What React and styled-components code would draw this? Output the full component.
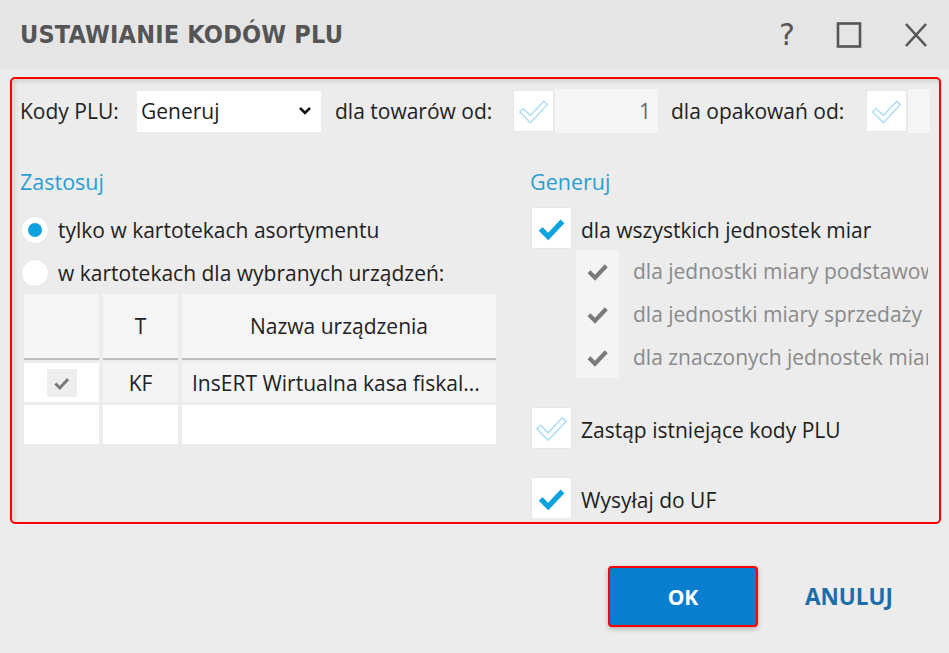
import React, { useState } from 'react';
import styled, { createGlobalStyle } from 'styled-components';

const GlobalStyle = createGlobalStyle`
  html, body {
    margin: 0;
    padding: 0;
    background: #ececec;
  }
  body {
    font-family: "Open Sans", "Noto Sans", sans-serif;
    color: #1e1e1e;
  }
`;

const Check = ({ variant = 'solid', size = 40 }) => {
  const path = 'M8 21 L16 29 L31 13';
  if (variant === 'outline') {
    return (
      <svg width={size} height={size} viewBox="0 0 40 40">
        <path d={path} fill="none" stroke="#a9dcf2" strokeWidth="7" strokeLinejoin="miter" strokeLinecap="square" />
        <path d={path} fill="none" stroke="#ffffff" strokeWidth="4" strokeLinejoin="miter" strokeLinecap="square" />
      </svg>
    );
  }
  const color = variant === 'gray' ? '#7a7a7a' : '#0ea2df';
  return (
    <svg width={size} height={size} viewBox="0 0 40 40">
      <path d={path} fill="none" stroke={color} strokeWidth="5.5" strokeLinejoin="miter" strokeLinecap="butt" />
    </svg>
  );
};

const Window = styled.div`
  width: 949px;
  height: 653px;
  display: flex;
  flex-direction: column;
  background: #ececec;
  overflow: hidden;
`;

const TitleBar = styled.div`
  height: 69px;
  flex-shrink: 0;
  background: #e5e5e5;
  display: flex;
  align-items: center;
  padding: 0 20px;
`;

const Title = styled.h1`
  flex: 1;
  margin: 0;
  font-family: "Liberation Sans Narrow", "DejaVu Sans Condensed", "Liberation Sans", sans-serif;
  font-weight: 700;
  font-size: 25px;
  color: #555;
  letter-spacing: 0.2px;
`;

const WinButtons = styled.div`
  display: flex;
  align-items: center;
  gap: 41px;
  color: #555;
`;

const HelpGlyph = styled.span`
  font-family: "DejaVu Sans", sans-serif;
  font-size: 30px;
  line-height: 1;
  color: #555;
`;

const Body = styled.div`
  padding: 8px 8px 0 10px;
`;

const Panel = styled.div`
  height: 447px;
  box-sizing: border-box;
  border: 2px solid #f00;
  border-radius: 5px;
  background: #ececec;
  box-shadow: inset 3px 3px 5px rgba(0, 0, 0, 0.1);
  padding: 10px 10px 0 8px;
  overflow: hidden;
`;

const TopRow = styled.div`
  display: flex;
  align-items: center;
  height: 44px;
  font-size: 21px;
`;

const Label = styled.span`
  width: ${({ $w }) => $w}px;
  flex-shrink: 0;
  white-space: nowrap;
  color: #222;
`;

const Select = styled.div`
  width: 184px;
  height: 41px;
  box-sizing: border-box;
  background: #fff;
  display: flex;
  align-items: center;
  justify-content: space-between;
  padding: 0 9px 0 4px;
  margin-right: 14px;
  flex-shrink: 0;
`;

const Box = styled.div`
  width: 41px;
  height: 42px;
  box-sizing: border-box;
  background: #fff;
  border: 1px solid #e6e6e6;
  display: flex;
  align-items: center;
  justify-content: center;
  flex-shrink: 0;
`;

const NumField = styled.div`
  width: ${({ $w }) => $w}px;
  height: 44px;
  background: #f5f5f5;
  margin-left: 1px;
  display: flex;
  align-items: center;
  justify-content: flex-end;
  padding-right: 7px;
  box-sizing: border-box;
  color: #666;
  flex-shrink: 0;
`;

const Gap = styled.div`
  width: ${({ $w }) => $w}px;
  flex-shrink: 0;
`;

const Columns = styled.div`
  display: grid;
  grid-template-columns: 478px 398px;
  column-gap: 32px;
  margin-top: 35px;
`;

const Column = styled.div`
  display: flex;
  flex-direction: column;
  overflow: hidden;
`;

const SectionTitle = styled.div`
  font-size: 21.5px;
  line-height: 28px;
  color: #2a9fd0;
  margin-bottom: 12px;
`;

const OptionRow = styled.div`
  display: flex;
  align-items: center;
  height: 43px;
  gap: 10px;
  font-size: 21px;
  white-space: nowrap;
  color: #1e1e1e;
`;

const Radio = styled.div`
  width: 26px;
  height: 26px;
  border-radius: 50%;
  background: #fff;
  margin-left: 2px;
  flex-shrink: 0;
  box-shadow: 0 0 2px rgba(0, 0, 0, 0.08);
  display: flex;
  align-items: center;
  justify-content: center;
  &::after {
    content: '';
    width: 14px;
    height: 14px;
    border-radius: 50%;
    background: ${({ $on }) => ($on ? '#0ea2df' : 'transparent')};
  }
`;

const Table = styled.div`
  display: grid;
  grid-template-columns: 75px 75px 314px;
  column-gap: 4px;
  row-gap: 3px;
  margin-left: 4px;
  font-size: 21px;
`;

const HeadCell = styled.div`
  height: 64px;
  background: #f5f5f5;
  border-bottom: 2px solid #bdbdbd;
  display: flex;
  align-items: center;
  justify-content: center;
  color: #222;
`;

const Cell = styled.div`
  height: 39px;
  background: ${({ $tone }) => ($tone === 'grey' ? '#f4f4f4' : '#fff')};
  display: flex;
  align-items: center;
  justify-content: ${({ $left }) => ($left ? 'flex-start' : 'center')};
  padding-left: ${({ $left }) => ($left ? '10px' : '0')};
  white-space: nowrap;
  overflow: hidden;
  color: #222;
`;

const MiniBox = styled.div`
  width: 30px;
  height: 28px;
  background: #eeeeee;
  display: flex;
  align-items: center;
  justify-content: center;
`;

const CheckRow = styled.div`
  display: flex;
  align-items: center;
  gap: 9px;
  height: 40px;
  margin-left: 1px;
  margin-top: ${({ $mt }) => $mt || 0}px;
  font-size: 21px;
  white-space: nowrap;
  color: #1e1e1e;
`;

const CheckText = styled.span`
  padding-top: 3px;
`;

const SubList = styled.div`
  display: flex;
  flex-direction: column;
  margin-left: 46px;
  margin-top: 2px;
`;

const SubRow = styled.div`
  display: flex;
  align-items: center;
  height: 42.7px;
  font-size: 21px;
  white-space: nowrap;
  color: #8a8a8a;
`;

const SubCheck = styled.div`
  width: 43px;
  height: 100%;
  background: #f4f4f4;
  display: flex;
  align-items: center;
  justify-content: center;
  margin-right: 14px;
  flex-shrink: 0;
`;

const Footer = styled.div`
  display: flex;
  align-items: center;
  justify-content: flex-end;
  gap: 47px;
  padding: 42px 48px 0 0;
`;

const OkButton = styled.button`
  width: 150px;
  height: 61px;
  border: 2px solid #f00;
  border-radius: 4px;
  background: #0a7fd0;
  box-shadow: 0 2px 5px rgba(0, 0, 0, 0.25);
  color: #fff;
  font-family: "Open Sans", sans-serif;
  font-weight: 700;
  font-size: 21px;
  cursor: pointer;
`;

const CancelButton = styled.button`
  border: none;
  background: transparent;
  padding: 0;
  color: #1c6ea8;
  font-family: "Open Sans", sans-serif;
  font-weight: 700;
  font-size: 22.5px;
  cursor: pointer;
`;

export default function App() {
  const [scope, setScope] = useState('asortyment');

  return (
    <>
      <GlobalStyle />
      <Window>
        <TitleBar>
          <Title>USTAWIANIE KODÓW PLU</Title>
          <WinButtons>
            <HelpGlyph>?</HelpGlyph>
            <svg width="26" height="26" viewBox="0 0 26 26">
              <rect x="2" y="1.5" width="22" height="23" fill="none" stroke="#555" strokeWidth="2.6" />
            </svg>
            <svg width="26" height="26" viewBox="0 0 26 26">
              <path d="M3 2 L23 24 M23 2 L3 24" stroke="#555" strokeWidth="2.6" />
            </svg>
          </WinButtons>
        </TitleBar>

        <Body>
          <Panel>
            <TopRow>
              <Label $w={117}>Kody PLU:</Label>
              <Select>
                <span>Generuj</span>
                <svg width="14" height="10" viewBox="0 0 14 10">
                  <path d="M2 2 L7 7 L12 2" fill="none" stroke="#111" strokeWidth="2.6" />
                </svg>
              </Select>
              <Label $w={178}>dla towarów od:</Label>
              <Box><Check variant="outline" size={36} /></Box>
              <NumField $w={103}>1</NumField>
              <Gap $w={13} />
              <Label $w={195}>dla opakowań od:</Label>
              <Box><Check variant="outline" size={36} /></Box>
              <NumField $w={22} />
            </TopRow>

            <Columns>
              <Column>
                <SectionTitle>Zastosuj</SectionTitle>
                <OptionRow onClick={() => setScope('asortyment')}>
                  <Radio $on={scope === 'asortyment'} />
                  tylko w kartotekach asortymentu
                </OptionRow>
                <OptionRow onClick={() => setScope('urzadzenia')}>
                  <Radio $on={scope === 'urzadzenia'} />
                  w kartotekach dla wybranych urządzeń:
                </OptionRow>
                <Table>
                  <HeadCell />
                  <HeadCell>T</HeadCell>
                  <HeadCell>Nazwa urządzenia</HeadCell>
                  <Cell>
                    <MiniBox><Check variant="gray" size={22} /></MiniBox>
                  </Cell>
                  <Cell $tone="grey">KF</Cell>
                  <Cell $tone="grey" $left>InsERT Wirtualna kasa fiskal...</Cell>
                  <Cell />
                  <Cell />
                  <Cell />
                </Table>
              </Column>

              <Column>
                <SectionTitle>Generuj</SectionTitle>
                <CheckRow>
                  <Box><Check size={38} /></Box>
                  <CheckText>dla wszystkich jednostek miar</CheckText>
                </CheckRow>
                <SubList>
                  <SubRow>
                    <SubCheck><Check variant="gray" size={30} /></SubCheck>
                    dla jednostki miary podstawowej
                  </SubRow>
                  <SubRow>
                    <SubCheck><Check variant="gray" size={30} /></SubCheck>
                    dla jednostki miary sprzedaży
                  </SubRow>
                  <SubRow>
                    <SubCheck><Check variant="gray" size={30} /></SubCheck>
                    dla znaczonych jednostek miar
                  </SubRow>
                </SubList>
                <CheckRow $mt={30}>
                  <Box><Check variant="outline" size={38} /></Box>
                  <CheckText>Zastąp istniejące kody PLU</CheckText>
                </CheckRow>
                <CheckRow $mt={30}>
                  <Box><Check size={38} /></Box>
                  <CheckText>Wysyłaj do UF</CheckText>
                </CheckRow>
              </Column>
            </Columns>
          </Panel>

          <Footer>
            <OkButton>OK</OkButton>
            <CancelButton>ANULUJ</CancelButton>
          </Footer>
        </Body>
      </Window>
    </>
  );
}
